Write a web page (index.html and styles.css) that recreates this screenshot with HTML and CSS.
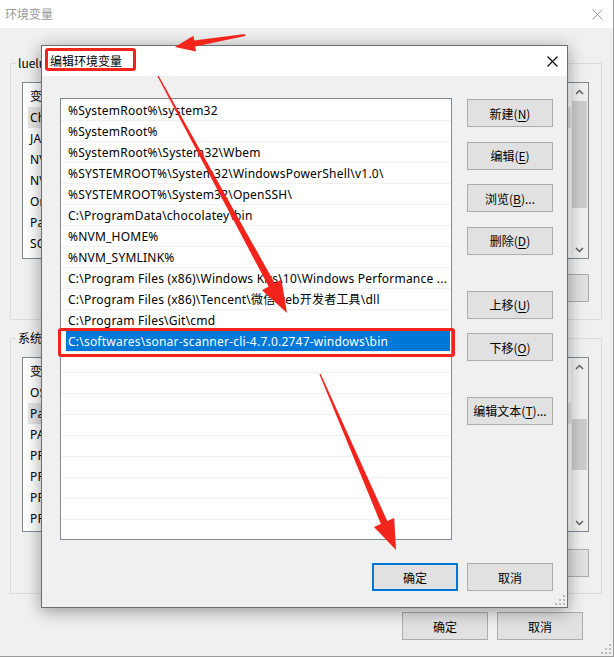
FILE: index.html
```html
<!DOCTYPE html>
<html lang="zh-CN">
<head>
<meta charset="utf-8">
<title>编辑环境变量</title>
<link rel="stylesheet" href="styles.css">
</head>
<body>
<div class="win">
  <div class="titlebar">
    <span class="wtitle">环境变量</span>
    <svg class="wclose" width="11" height="11" viewBox="0 0 11 11"><path d="M0.5 0.5L10.5 10.5M10.5 0.5L0.5 10.5" stroke="#9a9a9a" stroke-width="1" fill="none"/></svg>
  </div>
  <div class="wbody">
    <div class="group">
      <span class="glabel">lueluelue 的用户变量(<u>U</u>)</span>
      <div class="lv lv1">
        <div class="lv-main">
          <div class="lv-head"><span class="c1">变量</span><span class="c2">值</span></div>
          <div class="lv-row sel"><span class="c1">ChocolateyLastPathUpdate</span><span class="c2">133056785456789012</span></div>
          <div class="lv-row"><span class="c1">JAVA_HOME</span><span class="c2">C:\Program Files\Java\jdk1.8.0</span></div>
          <div class="lv-row"><span class="c1">NVM_HOME</span><span class="c2">C:\Users\lueluelue\AppData\Roaming\nvm</span></div>
          <div class="lv-row"><span class="c1">NVM_SYMLINK</span><span class="c2">C:\Program Files\nodejs</span></div>
          <div class="lv-row"><span class="c1">OneDrive</span><span class="c2">C:\Users\lueluelue\OneDrive</span></div>
          <div class="lv-row"><span class="c1">Path</span><span class="c2">%SystemRoot%\system32</span></div>
          <div class="lv-row"><span class="c1">SONAR_HOME</span><span class="c2">C:\softwares\sonar</span></div>
        </div>
        <div class="vscroll">
          <div class="sb-btn"><svg width="9" height="6" viewBox="0 0 9 6"><path d="M1 5L4.5 1.5L8 5" stroke="#606060" stroke-width="1.5" fill="none"/></svg></div>
          <div class="sb-track"><div class="sb-thumb t1"></div></div>
          <div class="sb-btn"><svg width="9" height="6" viewBox="0 0 9 6"><path d="M1 1L4.5 4.5L8 1" stroke="#606060" stroke-width="1.5" fill="none"/></svg></div>
        </div>
      </div>
      <div class="btnrow">
        <button class="btn">新建(<u>N</u>)...</button>
        <button class="btn">编辑(<u>E</u>)...</button>
        <button class="btn">删除(<u>D</u>)</button>
      </div>
    </div>

    <div class="group g2">
      <span class="glabel">系统变量(<u>S</u>)</span>
      <div class="lv lv2">
        <div class="lv-main">
          <div class="lv-head"><span class="c1">变量</span><span class="c2">值</span></div>
          <div class="lv-row"><span class="c1">OS</span><span class="c2">Windows_NT</span></div>
          <div class="lv-row sel"><span class="c1">Path</span><span class="c2">C:\softwares\sonar-scanner</span></div>
          <div class="lv-row"><span class="c1">PATHEXT</span><span class="c2">.COM;.EXE;.BAT;.CMD</span></div>
          <div class="lv-row"><span class="c1">PROCESSOR_ARCHITECTURE</span><span class="c2">AMD64</span></div>
          <div class="lv-row"><span class="c1">PROCESSOR_IDENTIFIER</span><span class="c2">Intel64 Family 6</span></div>
          <div class="lv-row"><span class="c1">PROCESSOR_LEVEL</span><span class="c2">6</span></div>
          <div class="lv-row"><span class="c1">PROCESSOR_REVISION</span><span class="c2">9e0a</span></div>
        </div>
        <div class="vscroll">
          <div class="sb-btn"><svg width="9" height="6" viewBox="0 0 9 6"><path d="M1 5L4.5 1.5L8 5" stroke="#606060" stroke-width="1.5" fill="none"/></svg></div>
          <div class="sb-track"><div class="sb-thumb t2"></div></div>
          <div class="sb-btn"><svg width="9" height="6" viewBox="0 0 9 6"><path d="M1 1L4.5 4.5L8 1" stroke="#606060" stroke-width="1.5" fill="none"/></svg></div>
        </div>
      </div>
      <div class="btnrow btnrow2">
        <button class="btn">新建(<u>W</u>)...</button>
        <button class="btn">编辑(<u>I</u>)...</button>
        <button class="btn">删除(<u>L</u>)</button>
      </div>
    </div>

    <div class="wfooter">
      <button class="btn">确定</button>
      <button class="btn">取消</button>
    </div>
  </div>
  <svg class="grip wgrip" width="11" height="11" viewBox="0 0 11 11"><g fill="#bcbcbc"><rect x="8" y="0" width="2" height="2"/><rect x="4" y="4" width="2" height="2"/><rect x="8" y="4" width="2" height="2"/><rect x="0" y="8" width="2" height="2"/><rect x="4" y="8" width="2" height="2"/><rect x="8" y="8" width="2" height="2"/></g></svg>

  <div class="dialog">
    <div class="dtitlebar">
      <span class="dtitle">编辑环境变量<span class="mark mark-title"></span></span>
      <svg class="dclose" width="11" height="11" viewBox="0 0 11 11"><path d="M0.5 0.5L10.5 10.5M10.5 0.5L0.5 10.5" stroke="#000" stroke-width="1.1" fill="none"/></svg>
    </div>
    <div class="dbody">
      <div class="dmain">
        <div class="plist">
          <div class="prow"><span class="ptxt">%SystemRoot%\system32</span></div>
          <div class="prow"><span class="ptxt">%SystemRoot%</span></div>
          <div class="prow"><span class="ptxt">%SystemRoot%\System32\Wbem</span></div>
          <div class="prow"><span class="ptxt">%SYSTEMROOT%\System32\WindowsPowerShell\v1.0\</span></div>
          <div class="prow"><span class="ptxt">%SYSTEMROOT%\System32\OpenSSH\</span></div>
          <div class="prow"><span class="ptxt">C:\ProgramData\chocolatey\bin</span></div>
          <div class="prow"><span class="ptxt">%NVM_HOME%</span></div>
          <div class="prow"><span class="ptxt">%NVM_SYMLINK%</span></div>
          <div class="prow"><span class="ptxt">C:\Program Files (x86)\Windows Kits\10\Windows Performance ...</span></div>
          <div class="prow"><span class="ptxt">C:\Program Files (x86)\Tencent\微信web开发者工具\dll</span></div>
          <div class="prow"><span class="ptxt">C:\Program Files\Git\cmd</span></div>
          <div class="prow psel"><span class="ptxt">C:\softwares\sonar-scanner-cli-4.7.0.2747-windows\bin</span><span class="mark mark-row"></span></div>
          <div class="prow"></div>
          <div class="prow"></div>
          <div class="prow"></div>
          <div class="prow"></div>
          <div class="prow"></div>
          <div class="prow"></div>
          <div class="prow"></div>
          <div class="prow"></div>
        </div>
        <div class="dbtns">
          <button class="btn">新建(<u>N</u>)</button>
          <button class="btn">编辑(<u>E</u>)</button>
          <button class="btn">浏览(<u>B</u>)...</button>
          <button class="btn">删除(<u>D</u>)</button>
          <button class="btn sep">上移(<u>U</u>)</button>
          <button class="btn">下移(<u>O</u>)</button>
          <button class="btn sep">编辑文本(<u>T</u>)...</button>
        </div>
      </div>
      <div class="dfooter">
        <button class="btn default">确定</button>
        <button class="btn">取消</button>
      </div>
    </div>
    <svg class="grip dgrip" width="11" height="11" viewBox="0 0 11 11"><g fill="#bcbcbc"><rect x="8" y="0" width="2" height="2"/><rect x="4" y="4" width="2" height="2"/><rect x="8" y="4" width="2" height="2"/><rect x="0" y="8" width="2" height="2"/><rect x="4" y="8" width="2" height="2"/><rect x="8" y="8" width="2" height="2"/></g></svg>
  </div>

  <svg class="arrows" width="614" height="657" viewBox="0 0 614 657">
    <g fill="#f2241c">
      <polygon points="244.8,34 194.2,40.6 193.4,35.7 175,47 196.1,51.5 195.2,46.6 245.2,36"/>
      <polygon points="157.4,76.3 268.6,286.6 262,290.2 287,313 281.4,279.6 274.8,283.2 158.6,75.7"/>
      <polygon points="319.4,374.3 380.9,523.9 374,526.9 396,550 394.2,518.1 387.3,521.1 320.6,373.7"/>
    </g>
  </svg>
</div>
</body>
</html>
```

FILE: styles.css
```css
* { box-sizing: border-box; }
html, body { margin: 0; padding: 0; }
body {
  width: 614px;
  height: 657px;
  overflow: hidden;
  background: #f0f0f0;
  font-family: "Noto Sans", "Noto Sans CJK SC", sans-serif;
  font-size: 12px;
  color: #000;
}
u { text-underline-offset: 2px; }

.win {
  position: relative;
  width: 614px;
  height: 657px;
  background: #f0f0f0;
  border-right: 1px solid #9a9a9a;
  border-bottom: 1px solid #9a9a9a;
  display: flex;
  flex-direction: column;
}
.titlebar {
  flex: none;
  height: 28px;
  background: #fff;
  display: flex;
  align-items: center;
  justify-content: space-between;
  padding: 0 10px 0 5px;
}
.wtitle {
  font-family: "Noto Sans CJK SC", sans-serif;
  font-size: 12px;
  color: #999;
  line-height: 16px;
}
.wbody {
  flex: 1;
  display: flex;
  flex-direction: column;
  padding: 35px 11px 0 10px;
}
.group {
  border: 1px solid #dcdcdc;
  padding: 0 12px 17px 11px;
  display: flex;
  flex-direction: column;
}
.g2 { margin-top: 18px; padding-bottom: 16px; }
.glabel {
  align-self: flex-start;
  margin: -9px 0 0 -6px;
  padding: 0 2px;
  height: 16px;
  line-height: 16px;
  background: #f0f0f0;
  font-family: "Noto Sans CJK SC", sans-serif;
}
.lv {
  margin-top: 11px;
  border: 1px solid #828790;
  background: #fff;
  display: flex;
}
.lv1 { height: 177px; }
.lv2 { height: 175px; }
.lv-main { flex: 1; overflow: hidden; }
.lv-head {
  height: 24px;
  display: flex;
  align-items: center;
  padding-left: 7px;
  font-family: "Noto Sans CJK SC", sans-serif;
}
.lv-row {
  height: 21px;
  display: flex;
  align-items: center;
  margin-left: 5px;
  padding-left: 2px;
  white-space: nowrap;
  letter-spacing: 0.22px;
}
.lv-row.sel { background: #e5e5e5; }
.c1 { width: 190px; flex: none; }
.c2 { flex: none; }
.vscroll {
  width: 17px;
  flex: none;
  background: #f0f0f0;
  display: flex;
  flex-direction: column;
}
.sb-btn {
  height: 17px;
  display: flex;
  align-items: center;
  justify-content: center;
  flex: none;
}
.sb-track { flex: 1; }
.sb-thumb { background: #cdcdcd; margin: 0 1px 0 1px; }
.t1 { margin-top: 1px; height: 107px; }
.t2 { margin-top: 44px; height: 51px; }

.btnrow {
  margin-top: 15px;
  display: flex;
  justify-content: flex-end;
  gap: 10px;
}
.btnrow2 { margin-top: 17px; }

.btn {
  width: 86px;
  height: 28px;
  margin: 0;
  padding: 0;
  background: #e1e1e1;
  border: 1px solid #adadad;
  border-radius: 0;
  font-family: "Noto Sans CJK SC", sans-serif;
  font-size: 12px;
  color: #000;
  display: flex;
  align-items: center;
  justify-content: center;
  white-space: nowrap;
}
.btn.default { border: 2px solid #0078d7; }

.wfooter {
  margin-top: 18px;
  margin-right: 19px;
  display: flex;
  justify-content: flex-end;
  gap: 9px;
}

.grip { position: absolute; }
.wgrip { right: 1px; bottom: 1px; }
.dgrip { right: 1px; bottom: 1px; }

/* dialog window on top */
.dialog {
  position: absolute;
  left: 41px;
  top: 45px;
  width: 527px;
  border: 1px solid #6f6f6f;
  background: #f0f0f0;
  box-shadow: 0 3px 16px rgba(0, 0, 0, 0.38);
  display: flex;
  flex-direction: column;
}
.dtitlebar {
  height: 30px;
  background: #fff;
  display: flex;
  align-items: center;
  justify-content: space-between;
  padding: 0 9px 0 8px;
}
.dtitle {
  position: relative;
  font-family: "Noto Sans CJK SC", sans-serif;
  font-size: 12px;
  line-height: 16px;
}
.dbody {
  padding: 22px 14px 16px 18px;
  display: flex;
  flex-direction: column;
}
.dmain {
  display: flex;
  gap: 15px;
  align-items: flex-start;
}
.plist {
  width: 392px;
  height: 442px;
  border: 1px solid #828790;
  background: #fff;
  padding-top: 1px;
  display: flex;
  flex-direction: column;
}
.prow {
  position: relative;
  height: 21px;
  flex: none;
  border-bottom: 1px solid #f0f0f0;
  display: flex;
}
.ptxt {
  flex: 1;
  margin: 0 1px 0 5px;
  padding-left: 2px;
  height: 20px;
  line-height: 21px;
  white-space: nowrap;
  overflow: hidden;
  letter-spacing: 0.22px;
}
.psel .ptxt { background: #0078d7; color: #fff; }
.dbtns {
  margin-top: 1px;
  width: 86px;
  display: flex;
  flex-direction: column;
  gap: 14.67px;
}
.dbtns .sep { margin-top: 21px; }
.dfooter {
  margin-top: 23px;
  display: flex;
  justify-content: flex-end;
  gap: 9px;
}

/* annotation marks */
.mark {
  position: absolute;
  border: 3px solid #f2241c;
  border-radius: 3px;
  pointer-events: none;
}
.mark-title { left: -5px; right: -14px; top: -5px; bottom: -2px; }
.mark-row { left: -3px; right: -4px; top: -3px; bottom: -6px; }

.arrows {
  position: absolute;
  left: 0;
  top: 0;
  pointer-events: none;
}
```
